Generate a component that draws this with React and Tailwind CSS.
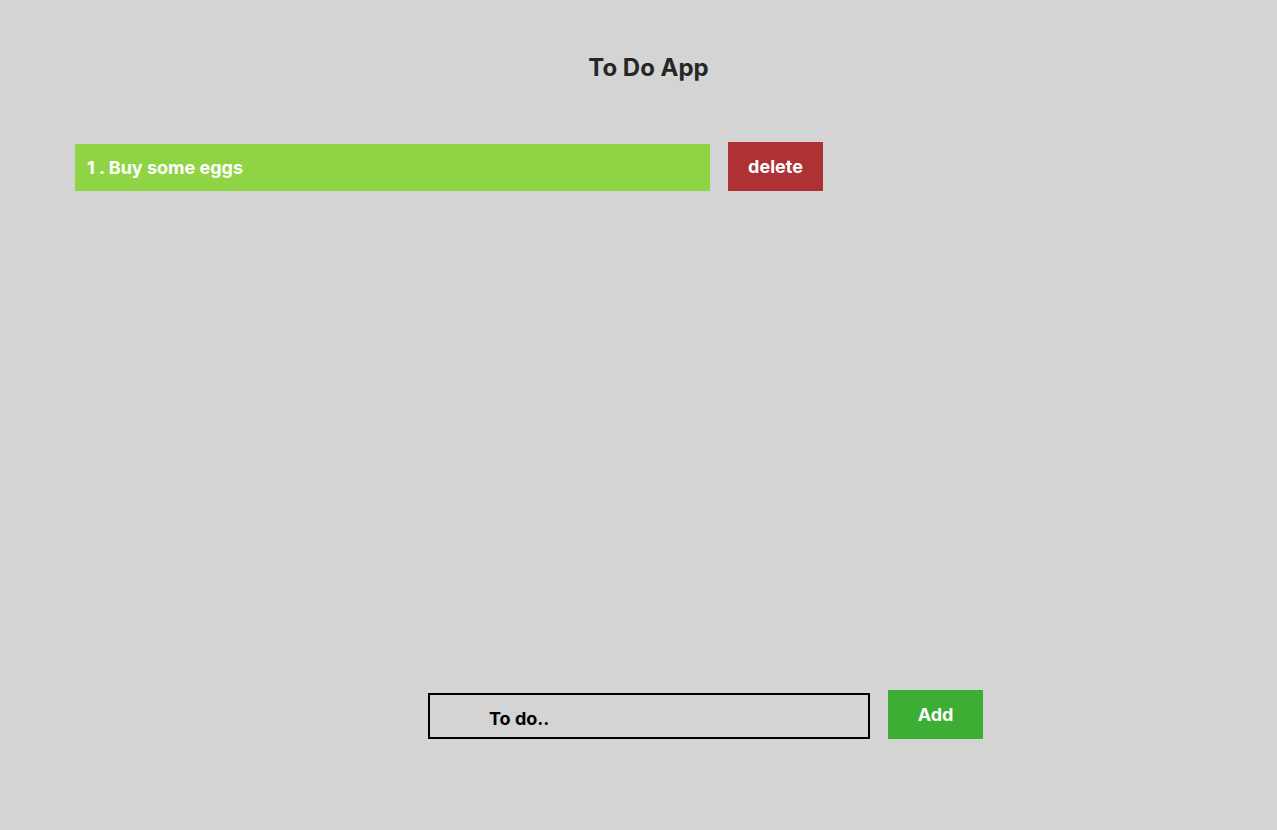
export default function App() {
  return (
    <div className="min-h-screen bg-[#d4d4d4] font-['Inter',sans-serif] flex flex-col">
      <h1 className="pt-[52px] pl-[20px] text-center text-[24px] leading-[32px] font-bold text-[#262626]">
        To Do App
      </h1>
      <div className="mt-[58px] ml-[75px] flex items-end gap-[18px]">
        <div className="w-[635px] h-[47px] bg-[#8fd444] flex items-center pl-[12px] text-[18px] font-bold text-white">
          1 . Buy some eggs
        </div>
        <button className="w-[95px] h-[49px] bg-[#ae3133] text-white text-[18px] font-bold flex items-center justify-center">
          delete
        </button>
      </div>
      <div className="mt-[499px] ml-[428px] flex items-end gap-[18px]">
        <input
          className="w-[442px] h-[46px] border-2 border-black bg-transparent pl-[59px] pt-[5px] text-[18px] font-bold text-black placeholder:text-black outline-none"
          placeholder="To do.."
        />
        <button className="w-[95px] h-[49px] bg-[#3bae33] text-white text-[18px] font-bold flex items-center justify-center">
          Add
        </button>
      </div>
    </div>
  );
}
